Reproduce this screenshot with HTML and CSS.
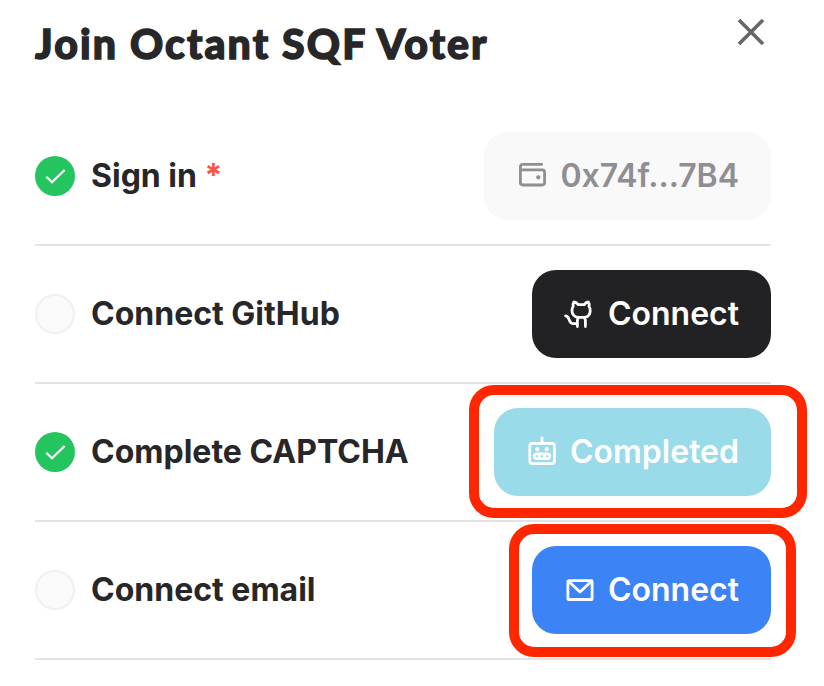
FILE: index.html
```html
<!DOCTYPE html>
<html lang="en">
<head>
    <meta charset="UTF-8">
    <meta name="viewport" content="width=device-width, initial-scale=1.0">
    <title>Join Octant SQF Voter</title>
    <link rel="stylesheet" href="styles.css">
</head>
<body>
    <div class="dialog">
        <header class="header">
            <h1 class="title">Join Octant SQF Voter</h1>
            <button class="close" aria-label="Close">
                <svg width="28" height="28" viewBox="0 0 28 28"><path d="M2 2 26 26M26 2 2 26"/></svg>
            </button>
        </header>

        <div class="step">
            <span class="status done">
                <svg width="40" height="40" viewBox="0 0 40 40"><path d="M11.3 20.7 17 26.2 29.6 14"/></svg>
            </span>
            <span class="label">Sign in <span class="required">*</span></span>
            <button class="btn wallet">
                <svg class="icon" viewBox="0 0 32 32">
                    <path d="M25.7 4.3H7Q4.4 4.3 4.4 6.9V22.6Q4.4 25 6.8 25H26.2Q28.6 25 28.6 22.6V12.2Q28.6 9.8 26.2 9.8H4.4"/>
                    <circle class="dot" cx="22.3" cy="17.3" r="2.1"/>
                </svg>
                <span class="text">0x74f...7B4</span>
            </button>
        </div>

        <div class="step">
            <span class="status"></span>
            <span class="label">Connect GitHub</span>
            <button class="btn github">
                <svg class="icon" viewBox="0 0 32 32">
                    <path d="M10 3.9Q8.6 5.8 9.2 8.4Q7.8 10.2 8 13Q8.5 18.8 14 19.3H20.5Q26 18.8 26.2 13Q26.4 10.2 25 8.4Q25.6 5.8 24.3 3.9Q21.7 4.2 20.2 6.7H14.2Q12.6 4.2 10 3.9Z"/>
                    <path d="M14.6 19.5Q13.4 20.8 13.4 22.5V28.6M20 19.5Q21.4 20.8 21.4 22.5V28.6M1.6 17.8C6.7 18.3 3.4 25.6 9.5 25.6H13.4"/>
                </svg>
                <span class="text">Connect</span>
            </button>
        </div>

        <div class="step">
            <span class="status done">
                <svg width="40" height="40" viewBox="0 0 40 40"><path d="M11.3 20.7 17 26.2 29.6 14"/></svg>
            </span>
            <span class="label">Complete CAPTCHA</span>
            <button class="btn captcha">
                <svg class="icon" viewBox="0 0 32 32">
                    <rect x="3.8" y="7.4" width="24.6" height="20.2" rx="2.6"/>
                    <path d="M16 2V7"/>
                    <circle class="dot" cx="11.2" cy="13.2" r="2.1"/>
                    <circle class="dot" cx="20.8" cy="13.2" r="2.1"/>
                    <rect x="8.3" y="17.8" width="15.4" height="4.8" rx="2.4"/>
                    <path d="M13.4 17.8V22.6M18.6 17.8V22.6"/>
                </svg>
                <span class="text">Completed</span>
            </button>
            <span class="highlight highlight-captcha"></span>
        </div>

        <div class="step">
            <span class="status"></span>
            <span class="label">Connect email</span>
            <button class="btn email">
                <svg class="icon" viewBox="0 0 32 32">
                    <rect x="3.9" y="6.7" width="24.2" height="18.8" rx="0.8"/>
                    <path d="M4.6 7.2 16 18 27.4 7.2"/>
                </svg>
                <span class="text">Connect</span>
            </button>
            <span class="highlight highlight-email"></span>
        </div>
    </div>
</body>
</html>
```
FILE: styles.css
```css
* { box-sizing: border-box; }
body { margin: 0; background-color: #fff; color: #272729; font-family: Inter, "Liberation Sans", sans-serif; overflow: hidden; }
button { border: none; font: inherit; cursor: pointer; }
svg { display: block; fill: none; stroke: currentColor; }

.dialog { width: 736px; margin-left: 35px; }
.header { display: flex; justify-content: space-between; align-items: flex-start; height: 108px; padding-top: 18px; }
.title { margin: 2px 0 0; font-family: Lato, sans-serif; font-size: 41px; font-weight: 900; line-height: 48px; letter-spacing: 2.1px; white-space: nowrap; -webkit-text-stroke: 1.4px currentColor; }
.close { padding: 0; margin-right: 6px; background: none; color: #666; }
.close svg { stroke-width: 3.6; }

.step { position: relative; display: flex; align-items: center; height: 138px; border-bottom: 2px solid #e4e4e5; }
.status { width: 40px; height: 40px; margin-right: 16px; border: 2px solid #f0f0f0; border-radius: 50%; background-color: #fafafa; }
.status.done { border: none; background-color: #24c55f; color: #fff; }
.status svg { stroke-width: 2.2; }
.label { font-size: 32px; font-weight: 700; line-height: 40px; white-space: nowrap; }
.required { color: #fb5540; }

.btn { display: flex; align-items: center; gap: 12px; height: 88px; margin-left: auto; padding: 0 32px; border-radius: 24px; color: #fff; font-size: 32px; font-weight: 600; white-space: nowrap; }
.text { padding-bottom: 2px; }
.icon { width: 32px; height: 32px; stroke-width: 2.8; stroke-linecap: round; stroke-linejoin: round; }
.dot { fill: currentColor; stroke: none; }
.wallet { background-color: #f9f9f9; color: #8e8e93; }
.github { background-color: #222224; }
.captcha { background-color: #9adbe9; }
.email { background-color: #3c83f6; }

/* Red outline drawn around a button */
.highlight { position: absolute; height: 133px; border: 10px solid #ff2600; border-radius: 25px; pointer-events: none; }
.highlight-captcha { top: 1px; right: -36px; width: 338px; }
.highlight-email { top: 2px; right: -25px; width: 287px; }
```
